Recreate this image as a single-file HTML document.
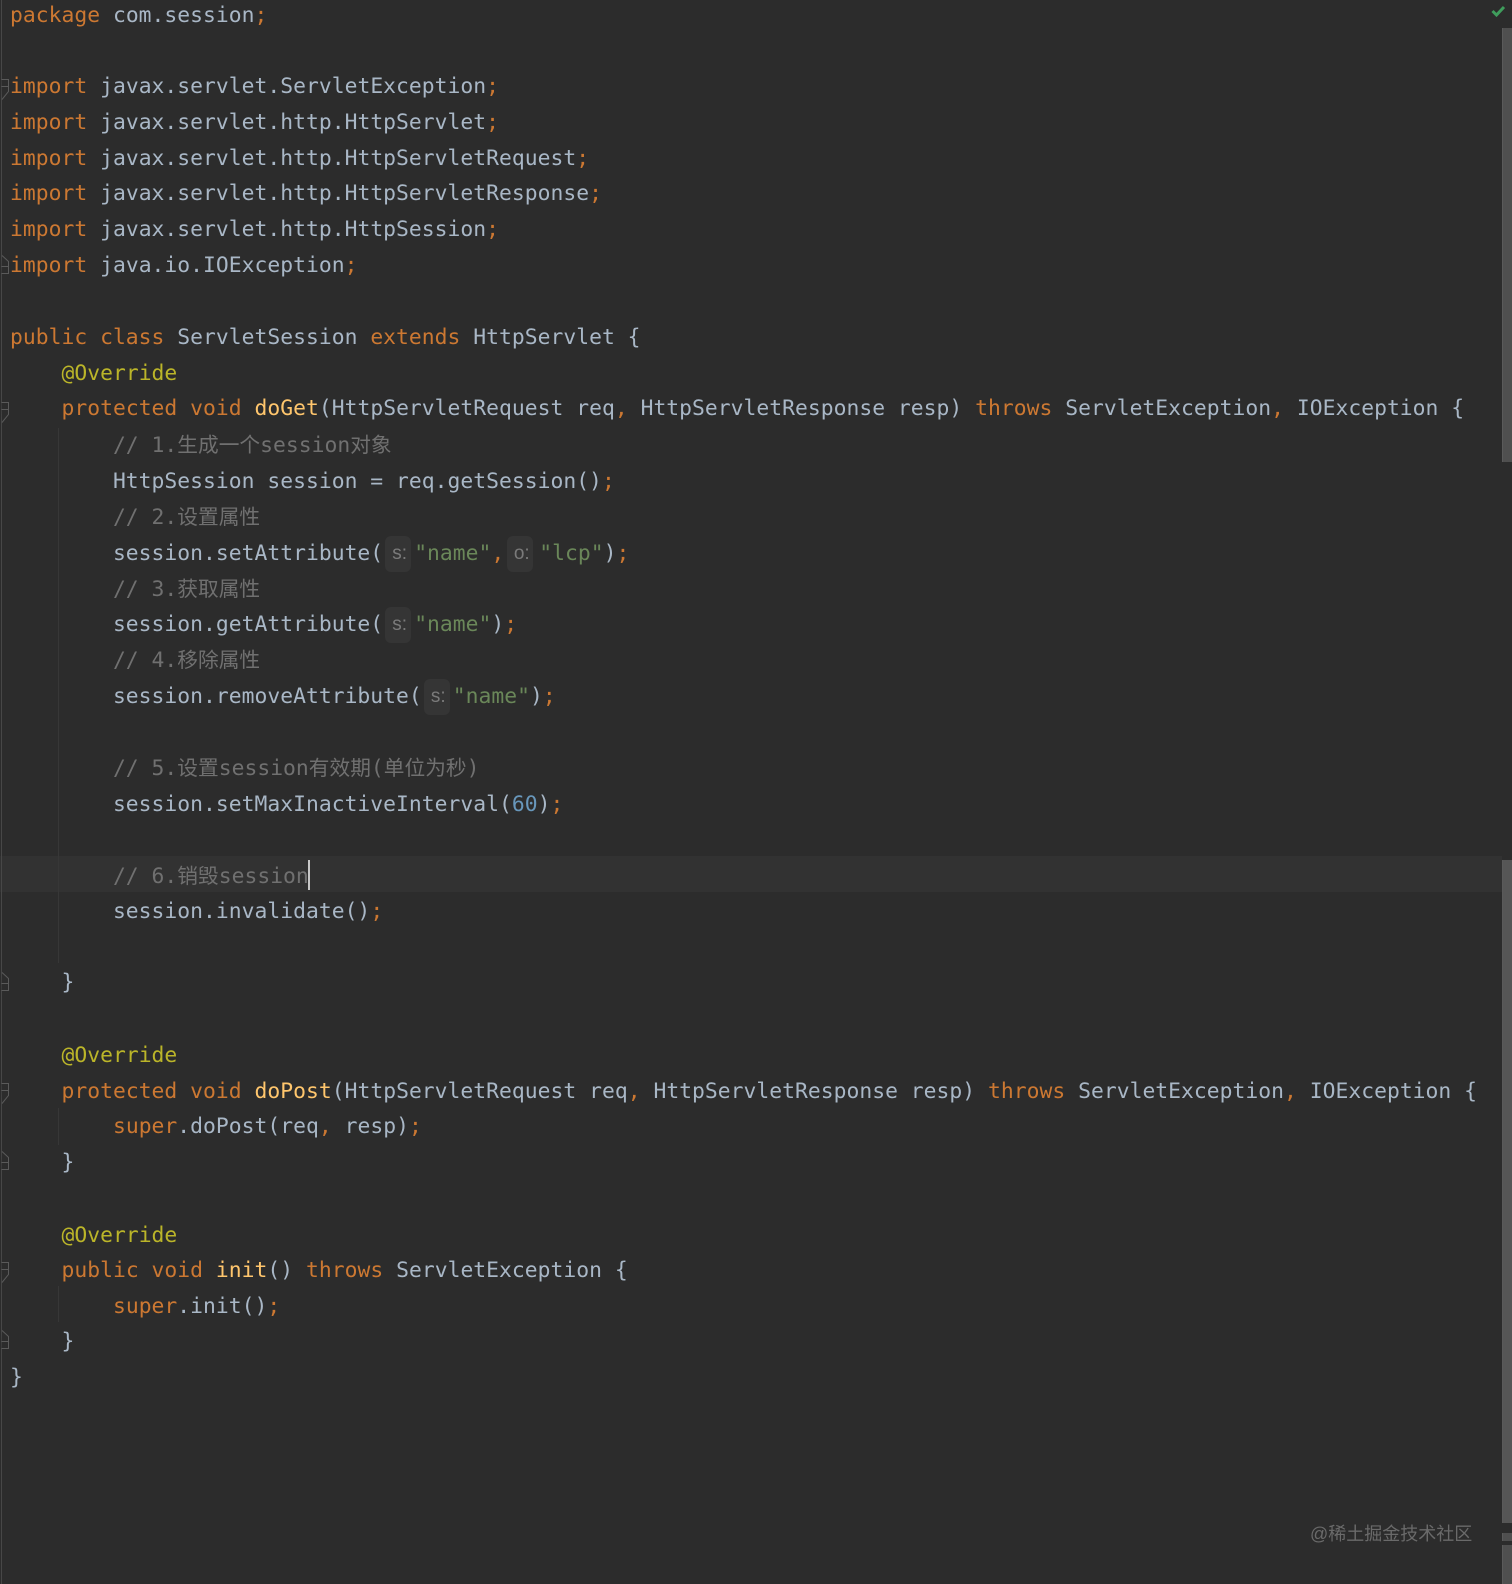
<!DOCTYPE html>
<html lang="zh">
<head>
<meta charset="utf-8">
<title>ServletSession.java</title>
<style>
html,body{margin:0;padding:0;background:#2c2c2c;}
body{position:relative;width:1512px;height:1584px;overflow:hidden;}
#code{position:absolute;left:10px;top:-1.7px;font-family:"DejaVu Sans Mono","Liberation Mono",monospace;font-size:21.35px;letter-spacing:.018px;color:#a9b7c6;filter:blur(0.3px);}
#code div{height:35.84px;line-height:35.84px;white-space:pre;}
#code div.u{position:relative;top:-1px;}
#code div.d{position:relative;top:1px;}
#code div.dd{position:relative;top:2px;}
.k{color:#cc7832}
.a{color:#bbb529}
.m{color:#ffc66d}
.s{color:#6a8759}
.n{color:#6897bb}
.c{color:#707070}
.z{font-family:"Noto Sans CJK SC","Liberation Sans",sans-serif;font-size:20.7px;line-height:0;}
.h{display:inline-block;vertical-align:top;box-sizing:border-box;width:26px;height:36px;line-height:35px;padding-left:3px;background:#353535;border-radius:6px;color:#7a7a7a;font-family:"Liberation Sans",sans-serif;font-size:19px;text-align:center;margin-left:2px;margin-right:3px;}
#band{position:absolute;left:0;top:856px;width:1502px;height:36px;background:#323232;}
#caret{position:absolute;left:308px;top:860px;width:2px;height:30px;background:#c8c8c8;}
.sb{position:absolute;left:1502px;width:10px;background:#4f4f4f;border-left:1px solid #5a5a5a;box-sizing:border-box;}
#wm{position:absolute;left:1310px;top:1521px;height:26px;line-height:26px;font-family:"Liberation Sans","Noto Sans CJK SC",sans-serif;font-size:18px;color:#6a6a6a;white-space:nowrap;}
svg{position:absolute;left:0;top:0;}
</style>
</head>
<body>
<div id="band"></div>
<svg width="1512" height="1584" viewBox="0 0 1512 1584" fill="none">
  <path d="M1.5 0V1584" stroke="#474747" stroke-width="1"/>
  <path d="M58.5 428V963M58.5 1108V1145M58.5 1286V1322" stroke="#373737" stroke-width="1"/>
  <g stroke="#5a5a5a" stroke-width="1" fill="#2c2c2c">
    <path d="M1.5 79.5H8.5V91.5L2 99.5"/><path d="M1.5 86.5H8"/>
    <path d="M1.5 402.5H8.5V414.5L2 422.5"/><path d="M1.5 409.5H8"/>
    <path d="M1.5 1083.5H8.5V1095.5L2 1103.5"/><path d="M1.5 1090.5H8"/>
    <path d="M1.5 1262.5H8.5V1274.5L2 1282.5"/><path d="M1.5 1269.5H8"/>
    <path d="M2 255.5L8.5 261.5V273.5H1.5"/><path d="M1.5 266.5H8"/>
    <path d="M2 972.5L8.5 978.5V990.5H1.5"/><path d="M1.5 983.5H8"/>
    <path d="M2 1151.5L8.5 1157.5V1169.5H1.5"/><path d="M1.5 1162.5H8"/>
    <path d="M2 1330.5L8.5 1336.5V1348.5H1.5"/><path d="M1.5 1341.5H8"/>
  </g>
  <path d="M1492.5 11L1496.5 15L1504 7" stroke="#3f9d5c" stroke-width="3"/>
</svg>
<div class="sb" style="top:28px;height:434px"></div>
<div class="sb" style="top:860px;height:663px;background:#565656"></div>
<div class="sb" style="top:1533px;height:8px"></div>
<div class="sb" style="top:1545px;height:39px"></div>
<div id="code">
<div><span class="k">package</span> com.session<span class="k">;</span></div>
<div></div>
<div class="u"><span class="k">import</span> javax.servlet.ServletException<span class="k">;</span></div>
<div class="u"><span class="k">import</span> javax.servlet.http.HttpServlet<span class="k">;</span></div>
<div class="u"><span class="k">import</span> javax.servlet.http.HttpServletRequest<span class="k">;</span></div>
<div class="u"><span class="k">import</span> javax.servlet.http.HttpServletResponse<span class="k">;</span></div>
<div class="u"><span class="k">import</span> javax.servlet.http.HttpSession<span class="k">;</span></div>
<div class="u"><span class="k">import</span> java.io.IOException<span class="k">;</span></div>
<div></div>
<div class="u"><span class="k">public class</span> ServletSession <span class="k">extends</span> HttpServlet {</div>
<div class="u">    <span class="a">@Override</span></div>
<div class="u">    <span class="k">protected void</span> <span class="m">doGet</span>(HttpServletRequest req<span class="k">,</span> HttpServletResponse resp) <span class="k">throws</span> ServletException<span class="k">,</span> IOException {</div>
<div class="c">        // 1.<span class="z">生成一个</span>session<span class="z">对象</span></div>
<div>        HttpSession session = req.getSession()<span class="k">;</span></div>
<div class="c">        // 2.<span class="z">设置属性</span></div>
<div>        session.setAttribute(<span class="h">s:</span><span class="s">"name"</span><span class="k">,</span><span class="h" style="margin-left:3px;margin-right:6px">o:</span><span class="s">"lcp"</span>)<span class="k">;</span></div>
<div class="c">        // 3.<span class="z">获取属性</span></div>
<div>        session.getAttribute(<span class="h">s:</span><span class="s">"name"</span>)<span class="k">;</span></div>
<div class="c">        // 4.<span class="z">移除属性</span></div>
<div>        session.removeAttribute(<span class="h">s:</span><span class="s">"name"</span>)<span class="k">;</span></div>
<div></div>
<div class="c">        // 5.<span class="z">设置</span>session<span class="z">有效期</span>(<span class="z">单位为秒</span>)</div>
<div>        session.setMaxInactiveInterval(<span class="n">60</span>)<span class="k">;</span></div>
<div></div>
<div class="c d">        // 6.<span class="z">销毁</span>session</div>
<div>        session.invalidate()<span class="k">;</span></div>
<div></div>
<div class="u">    }</div>
<div></div>
<div class="d">    <span class="a">@Override</span></div>
<div class="d">    <span class="k">protected void</span> <span class="m">doPost</span>(HttpServletRequest req<span class="k">,</span> HttpServletResponse resp) <span class="k">throws</span> ServletException<span class="k">,</span> IOException {</div>
<div>        <span class="k">super</span>.doPost(req<span class="k">,</span> resp)<span class="k">;</span></div>
<div>    }</div>
<div></div>
<div class="dd">    <span class="a">@Override</span></div>
<div class="d">    <span class="k">public void</span> <span class="m">init</span>() <span class="k">throws</span> ServletException {</div>
<div class="d">        <span class="k">super</span>.init()<span class="k">;</span></div>
<div>    }</div>
<div>}</div>
</div>
<div id="caret"></div>
<div id="wm">@稀土掘金技术社区</div>
</body>
</html>
